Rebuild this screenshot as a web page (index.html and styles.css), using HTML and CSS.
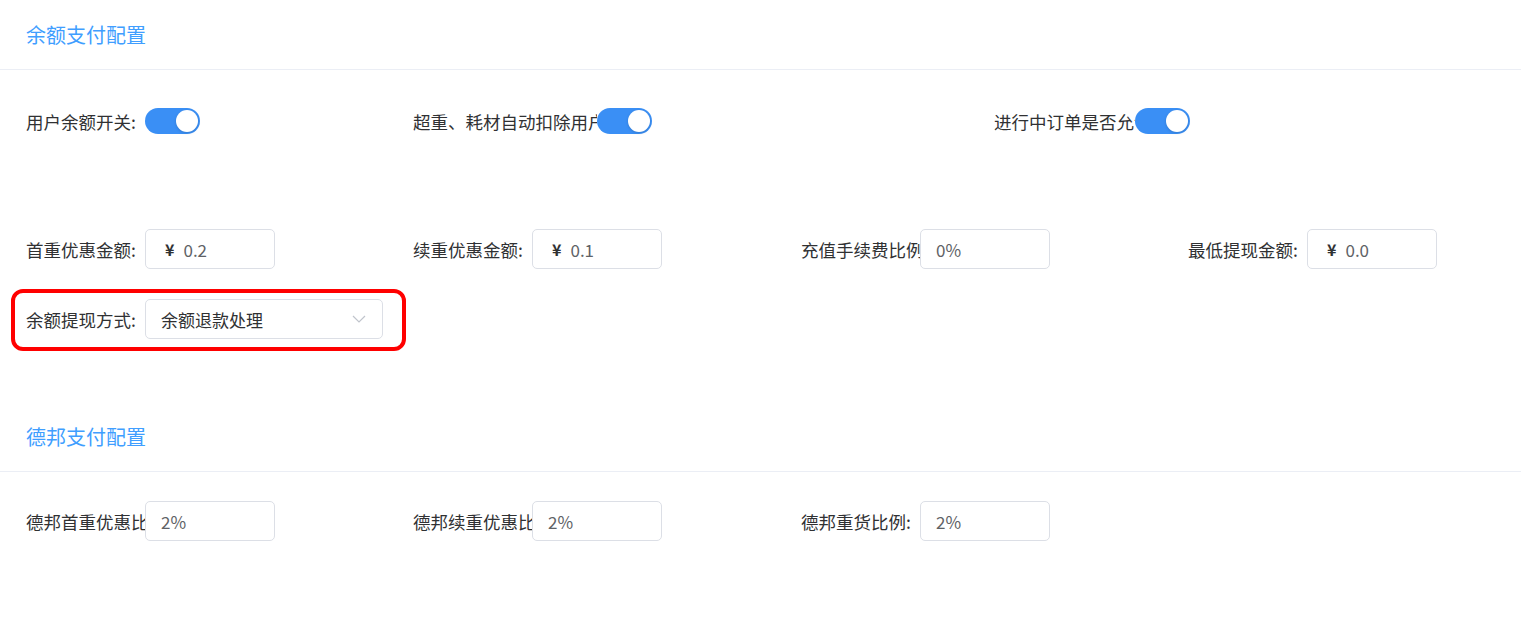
FILE: index.html
```html
<!DOCTYPE html>
<html>
<head>
  <meta charset="utf-8">
  <title>支付配置</title>
  <link rel="stylesheet" href="styles.css">
</head>
<body>
  <div class="panel">
    <div class="panel-head">余额支付配置</div>
    <div class="panel-body">
      <div class="form-row row-switch">
        <div class="form-item">
          <span class="label">用户余额开关:</span>
          <span class="switch"></span>
        </div>
        <div class="form-item">
          <span class="label label-wide">超重、耗材自动扣除用户余额:</span>
          <span class="switch"></span>
        </div>
        <div class="form-item">
          <span class="label label-mid">进行中订单是否允许提现:</span>
          <span class="switch"></span>
        </div>
      </div>

      <div class="form-row row-4">
        <div class="form-item">
          <span class="label">首重优惠金额:</span>
          <div class="input"><span class="yen">¥</span>0.2</div>
        </div>
        <div class="form-item">
          <span class="label">续重优惠金额:</span>
          <div class="input"><span class="yen">¥</span>0.1</div>
        </div>
        <div class="form-item">
          <span class="label">充值手续费比例:</span>
          <div class="input">0%</div>
        </div>
        <div class="form-item">
          <span class="label">最低提现金额:</span>
          <div class="input"><span class="yen">¥</span>0.0</div>
        </div>
      </div>

      <div class="form-row row-4 row-last">
        <div class="form-item marked">
          <span class="label">余额提现方式:</span>
          <div class="input select">
            余额退款处理
            <svg class="arrow" width="14" height="8" viewBox="0 0 14 8">
              <path d="M1 1 L7 7 L13 1" fill="none" stroke="#c0c4cc" stroke-width="1.2"/>
            </svg>
          </div>
        </div>
      </div>
    </div>
  </div>

  <div class="panel">
    <div class="panel-head">德邦支付配置</div>
    <div class="panel-body">
      <div class="form-row row-4 row-last">
        <div class="form-item">
          <span class="label">德邦首重优惠比例:</span>
          <div class="input">2%</div>
        </div>
        <div class="form-item">
          <span class="label">德邦续重优惠比例:</span>
          <div class="input">2%</div>
        </div>
        <div class="form-item">
          <span class="label">德邦重货比例:</span>
          <div class="input">2%</div>
        </div>
      </div>
    </div>
  </div>
</body>
</html>
```

FILE: styles.css
```css
body {
  margin: 0;
  padding: 0;
  background: #fff;
  font-family: "Noto Sans CJK SC", "Noto Sans", sans-serif;
}

.panel-head {
  height: 69px;
  line-height: 69px;
  padding-left: 26px;
  font-size: 20px;
  color: #409eff;
  border-bottom: 1px solid #ebeef5;
}

.panel-body {
  padding: 31px 26px 63px;
}

.panel + .panel .panel-body {
  padding-top: 29px;
}

.form-row {
  display: grid;
  margin-bottom: 30px;
}

.row-switch {
  grid-template-columns: 387px 581px 1fr;
  margin-bottom: 88px;
}

.row-4 {
  grid-template-columns: 387px 388px 387px 1fr;
}

.row-last {
  margin-bottom: 0;
}

.form-item {
  display: flex;
  align-items: center;
  height: 40px;
}

.label {
  flex: none;
  width: 119px;
  overflow: hidden;
  white-space: nowrap;
  font-size: 17.5px;
  color: #303133;
}

.label-wide {
  width: 184px;
}

.label-mid {
  width: 141px;
}

.switch {
  flex: none;
  position: relative;
  width: 55px;
  height: 26px;
  border-radius: 13px;
  background: #3a8ff5;
}

.switch::after {
  content: "";
  position: absolute;
  top: 2px;
  right: 2px;
  width: 22px;
  height: 22px;
  border-radius: 50%;
  background: #fff;
  box-shadow: 0 1px 3px rgba(0, 0, 0, 0.15);
}

.input {
  flex: none;
  display: flex;
  align-items: center;
  box-sizing: border-box;
  width: 130px;
  height: 40px;
  padding: 0 15px;
  border: 1px solid #dcdfe6;
  border-radius: 5px;
  background: #fff;
  font-size: 17px;
  color: #606266;
}

.yen {
  margin: 0 9px 0 4px;
  color: #303133;
  font-weight: bold;
  font-size: 16px;
}

.select {
  width: 238px;
  justify-content: space-between;
  color: #303133;
}

.arrow {
  margin-right: 1px;
}

.marked {
  position: relative;
  justify-self: start;
}

.marked::after {
  content: "";
  position: absolute;
  top: -10px;
  bottom: -12px;
  left: -15px;
  right: -23px;
  border: 4px solid #f00;
  border-radius: 12px;
  box-sizing: border-box;
  pointer-events: none;
}
```
